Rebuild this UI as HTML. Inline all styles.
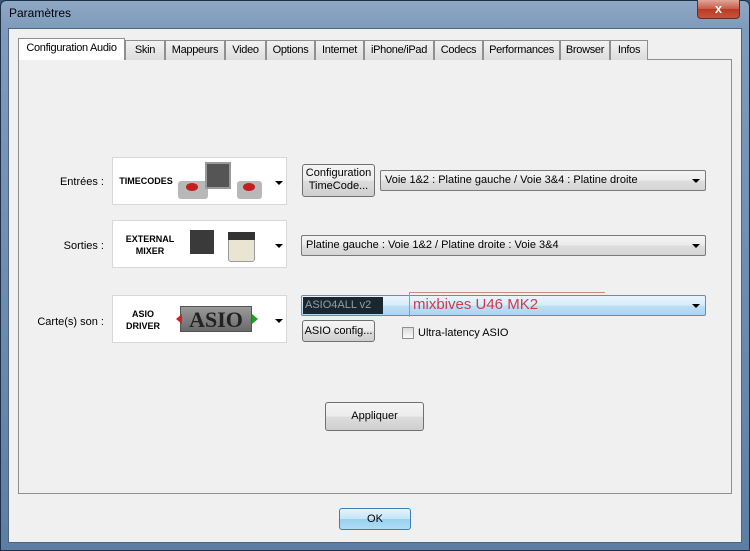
<!DOCTYPE html><html><head><meta charset="utf-8"><style>
*{box-sizing:border-box}
body{margin:0;width:750px;height:551px;overflow:hidden;font-family:"Liberation Sans",sans-serif;font-size:11px;color:#000;background:#3a5878}
.abs{position:absolute}
.win{position:absolute;left:0;top:0;width:750px;height:551px;background:linear-gradient(180deg,#8ea8c4 0%,#7f9bbb 5%,#6e8db0 50%,#5d7ea4 100%);border:1px solid #1d2f45;border-radius:6px 6px 0 0}
.client{position:absolute;left:8px;top:28px;width:734px;height:515px;background:#f0f0f0;border:1px solid #4d6580}
.tab{position:absolute;top:40px;height:20px;border:1px solid #8e8f8f;border-bottom:none;background:linear-gradient(#f2f2f2,#dcdcdc);text-align:center;line-height:18px;font-size:11px;letter-spacing:-0.3px}
.panel{position:absolute;left:18px;top:59px;width:714px;height:435px;border:1px solid #8e8f8f;background:#f0f0f0}
.btn{position:absolute;border:1px solid #707070;border-radius:3px;background:linear-gradient(#f4f4f4 0%,#ececec 50%,#dddddd 51%,#cfcfcf 100%);text-align:center;font-size:11px}
.combo{position:absolute;height:21px;border:1px solid #7a7a7a;border-radius:2px;background:linear-gradient(#f4f4f4 0%,#ebebeb 50%,#dedede 51%,#d4d4d4 100%);line-height:19px;padding-left:4px;font-size:11px}
.arr{position:absolute;width:0;height:0;border-left:4px solid transparent;border-right:4px solid transparent;border-top:4px solid #000}
.img{position:absolute;left:112px;width:175px;height:48px;background:#fff;border:1px solid #d8d8d8}
.lbl{position:absolute;text-align:right;width:90px;left:14px}
.bold{position:absolute;font-weight:bold;font-size:9px;text-align:center;line-height:12px}
</style></head><body>
<div class="win"></div>
<div class="abs" style="left:9px;top:6px;font-size:12px;color:#000">Paramètres</div>
<div class="abs" style="left:697px;top:0;width:43px;height:19px;border:1px solid #6b2a23;border-top:none;border-radius:0 0 4px 4px;background:linear-gradient(#e0a69a,#c75a45 50%,#b83a24 51%,#c8543c);color:#fff;font-weight:bold;text-align:center;line-height:18px;font-size:13px">x</div>
<div class="client"></div>
<div class="panel"></div>
<div class="tab" style="left:18px;width:107px;top:38px;height:22px;background:#fff;z-index:2;border-bottom:none">Configuration Audio</div>
<div class="tab" style="left:125px;width:40px">Skin</div>
<div class="tab" style="left:165px;width:60px">Mappeurs</div>
<div class="tab" style="left:225px;width:41px">Video</div>
<div class="tab" style="left:266px;width:49px">Options</div>
<div class="tab" style="left:315px;width:49px">Internet</div>
<div class="tab" style="left:364px;width:70px">iPhone/iPad</div>
<div class="tab" style="left:434px;width:49px">Codecs</div>
<div class="tab" style="left:483px;width:77px">Performances</div>
<div class="tab" style="left:560px;width:50px">Browser</div>
<div class="tab" style="left:610px;width:38px">Infos</div>

<div class="lbl" style="top:176px">Entrées :</div>
<div class="lbl" style="top:240px">Sorties :</div>
<div class="lbl" style="top:316px">Carte(s) son :</div>

<div class="img" style="top:157px"></div>
<div class="bold" style="left:116px;top:175px;width:60px">TIMECODES</div>
<div class="abs" style="left:178px;top:181px;width:30px;height:18px;background:#b8b8b8;border-radius:3px"></div>
<div class="abs" style="left:186px;top:183px;width:12px;height:8px;background:#c02020;border-radius:50%"></div>
<div class="abs" style="left:205px;top:162px;width:26px;height:27px;background:#555;border:2px solid #999"></div>
<div class="abs" style="left:237px;top:181px;width:25px;height:18px;background:#b8b8b8;border-radius:3px"></div>
<div class="abs" style="left:243px;top:183px;width:12px;height:8px;background:#c02020;border-radius:50%"></div>
<div class="arr" style="left:275px;top:181px"></div>

<div class="img" style="top:220px"></div>
<div class="bold" style="left:116px;top:233px;width:68px">EXTERNAL<br>MIXER</div>
<div class="abs" style="left:190px;top:230px;width:24px;height:24px;background:#3a3a3a"></div>
<div class="abs" style="left:228px;top:232px;width:27px;height:30px;background:#eae4d2;border:1px solid #999;border-radius:3px"></div>
<div class="abs" style="left:228px;top:232px;width:27px;height:8px;background:#333"></div>
<div class="arr" style="left:275px;top:244px"></div>

<div class="img" style="top:295px"></div>
<div class="bold" style="left:118px;top:308px;width:50px">ASIO<br>DRIVER</div>
<div class="abs" style="left:180px;top:306px;width:72px;height:26px;background:linear-gradient(#9a9a9a,#6a6a6a);border:1px solid #555;font:bold 22px 'Liberation Serif',serif;color:#222;text-align:center;line-height:26px">ASIO</div>
<div class="abs" style="left:176px;top:314px;width:0;height:0;border-top:5px solid transparent;border-bottom:5px solid transparent;border-right:6px solid #d02020"></div>
<div class="abs" style="left:252px;top:314px;width:0;height:0;border-top:5px solid transparent;border-bottom:5px solid transparent;border-left:6px solid #20a020"></div>
<div class="arr" style="left:275px;top:319px"></div>

<div class="btn" style="left:302px;top:164px;width:73px;height:33px;line-height:13px;padding-top:2px">Configuration<br>TimeCode...</div>
<div class="combo" style="left:380px;top:170px;width:326px">Voie 1&amp;2 : Platine gauche / Voie 3&amp;4 : Platine droite</div>
<div class="arr" style="left:692px;top:179px"></div>
<div class="combo" style="left:301px;top:235px;width:405px">Platine gauche : Voie 1&amp;2 / Platine droite : Voie 3&amp;4</div>
<div class="arr" style="left:692px;top:244px"></div>

<div class="abs" style="left:301px;top:295px;width:405px;height:21px;border:1px solid #5a8fc0;border-radius:2px;background:linear-gradient(#eaf5fd,#d6ecfa 50%,#bfe0f6 51%,#a9d4f2)"></div>
<div class="abs" style="left:303px;top:297px;width:80px;height:17px;background:#1a2630;color:#000;line-height:17px;padding-left:2px;font-size:11px"><span style="color:#8fa0aa">ASIO4ALL v2</span></div>
<div class="abs" style="left:409px;top:292px;width:196px;height:1px;background:#c88"></div>
<div class="abs" style="left:409px;top:292px;width:1px;height:25px;background:#c88"></div>
<div class="abs" style="left:413px;top:295px;color:#d03a4a;font-size:15px;line-height:20px">mixbives U46 MK2</div>
<div class="arr" style="left:692px;top:304px"></div>

<div class="btn" style="left:302px;top:320px;width:73px;height:22px;line-height:20px">ASIO config...</div>
<div class="abs" style="left:402px;top:327px;width:12px;height:12px;border:1px solid #8f8f8f;background:linear-gradient(#dcdcdc,#fafafa)"></div>
<div class="abs" style="left:418px;top:327px">Ultra-latency ASIO</div>

<div class="btn" style="left:325px;top:402px;width:99px;height:29px;line-height:27px">Appliquer</div>
<div class="btn" style="left:339px;top:508px;width:72px;height:22px;line-height:20px;border-color:#3c7fb1;background:linear-gradient(#e5f4fc,#c4e5f6 50%,#98d1ef 51%,#b1dcf2)">OK</div>
</body></html>
